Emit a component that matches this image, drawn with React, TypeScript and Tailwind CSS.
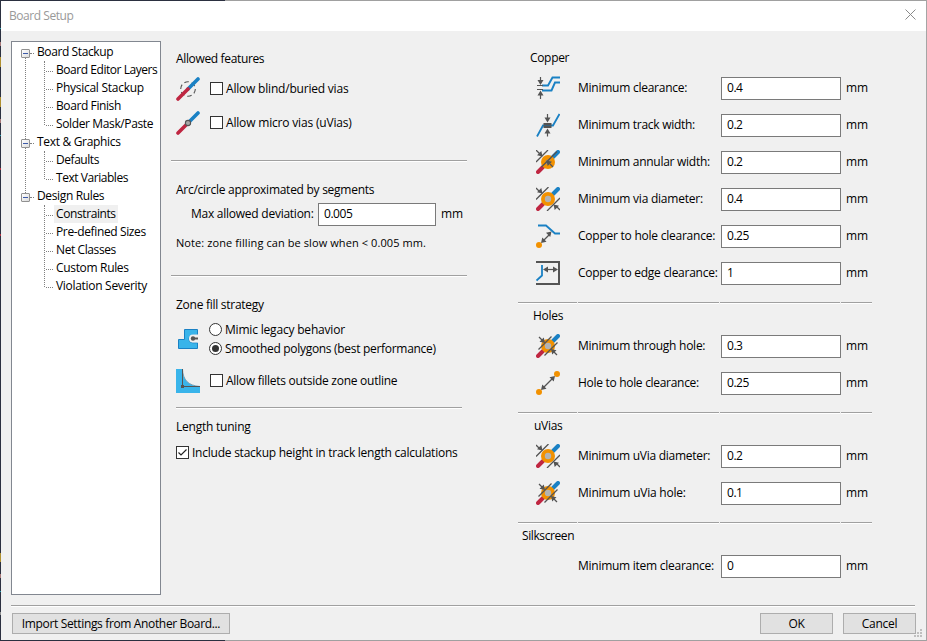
import type { ReactNode } from "react";

const GRAY = "#545454";
const BLUE = "#1a81c4";
const RED = "#bf2641";
const ORANGE = "#f29100";
const SKY = "#39b4ea";

function Icon({ children }: { children: ReactNode }) {
  return (
    <svg width="24" height="24" viewBox="0 0 24 24" fill="none" className="block shrink-0">
      {children}
    </svg>
  );
}

function Track() {
  return (
    <>
      <path d="M12 12 22 2" stroke={BLUE} strokeWidth="3.6" strokeLinecap="round" />
      <path d="M2 22 12 12" stroke={RED} strokeWidth="3.6" strokeLinecap="round" />
    </>
  );
}

function BlindViaIcon() {
  return (
    <Icon>
      <circle cx="12" cy="12" r="7.3" stroke={GRAY} strokeWidth="1.1" strokeDasharray="4.6 3" />
      <Track />
    </Icon>
  );
}

function MicroViaIcon() {
  return (
    <Icon>
      <Track />
      <circle cx="12" cy="12" r="2.6" fill="#a8a8a8" stroke={GRAY} strokeWidth="1.1" />
    </Icon>
  );
}

function ZoneFillIcon() {
  return (
    <Icon>
      <path
        d="M2.5 12.5h6v-10h13v5.7h-4.8a3.8 3.8 0 0 0 0 7.6h4.8v5.7h-19z"
        fill={SKY}
        stroke={BLUE}
      />
      <path d="M22 7.5h-5a4 4 0 0 0 0 8h5z" fill="#f0f0f0" />
      <path d="M17 11.500h5" stroke={GRAY} strokeWidth="2" />
      <circle cx="17" cy="11.500" r="2.2" fill={GRAY} />
    </Icon>
  );
}

function FilletIcon() {
  return (
    <Icon>
      <path d="M0 0h6.5C7 11 12 16.500 24 17.500V24H0z" fill={SKY} />
      <path d="M6.500 0C7 11 12 16.500 24 17.500" stroke="#6f9db5" strokeWidth=".9" />
      <path d="M6.500 0v17.500H24" stroke={GRAY} />
      <path d="M5 16h3v3H5z" fill={GRAY} />
    </Icon>
  );
}

function ClearanceIcon() {
  return (
    <Icon>
      <path d="M6 9.500h6L16.500 1.500H24" stroke={BLUE} strokeWidth="1.900" />
      <path d="M6 14.500h9.500L19 6.500h5" stroke={BLUE} strokeWidth="1.900" />
      <path d="M1 9.500h6M1 13.500h6" stroke={GRAY} strokeWidth="1" />
      <path d="M4.500 1v4M4.500 23v-4" stroke={GRAY} strokeWidth="1.200" />
      <path d="M1.500 4h6l-3 5zM1.500 19.500h6l-3-5z" fill={GRAY} />
    </Icon>
  );
}

function TrackWidthIcon() {
  return (
    <Icon>
      <path d="M1 23.500 7 12.500h10L23.500 1" stroke={BLUE} strokeWidth="1.800" />
      <path d="M7.500 10h8v5h-8z" fill={GRAY} />
      <path d="M8 12.500h7" stroke="#37617d" />
      <path d="M11.500 1v4M11.500 23.500v-4" stroke={GRAY} strokeWidth="1.200" />
      <path d="M8.500 4.500h6l-3 5zM8.500 20.500h6l-3-5z" fill={GRAY} />
    </Icon>
  );
}

function ThickTrack() {
  return (
    <>
      <path d="M17 7 22 2" stroke={BLUE} strokeWidth="4" strokeLinecap="round" />
      <path d="M2 22 7 17" stroke={RED} strokeWidth="4" strokeLinecap="round" />
    </>
  );
}

function AnnularIcon() {
  return (
    <Icon>
      <ThickTrack />
      <circle cx="12" cy="12" r="7" fill={ORANGE} />
      <circle cx="12" cy="12" r="2.600" fill="#a89270" />
      <path d="M0 12 12 0M5.500 17 21 1.500" stroke={GRAY} strokeWidth="1.300" />
      <path d="M0 0 4 4M17 17l-3-3" stroke={GRAY} strokeWidth="1.300" />
      <path d="M6.500 6.500 5.300 1 1 5.300zM10.500 10.500l1.200 5.500 4.300-4.300z" fill={GRAY} />
    </Icon>
  );
}

function ViaDiameterIcon() {
  return (
    <Icon>
      <ThickTrack />
      <circle cx="12" cy="12" r="7" fill={ORANGE} />
      <circle cx="12" cy="12" r="3.200" fill="#b3b3b3" />
      <path d="M0 12.500 12.500 0M11 24 24 11" stroke={GRAY} strokeWidth="1.300" />
      <path d="M0 1 4 5M24 23l-4-4" stroke={GRAY} strokeWidth="1.300" />
      <path d="M6.500 6.500 5.300 1 1 5.300zM17.500 17.500l1.200 5.500 4.300-4.300z" fill={GRAY} />
    </Icon>
  );
}

function HoleSizeIcon() {
  return (
    <Icon>
      <ThickTrack />
      <circle cx="12" cy="12" r="7" fill={ORANGE} />
      <circle cx="12" cy="12" r="3.200" fill="#b3b3b3" />
      <path d="M2.500 15.500 15.500 2.500M8.500 21.500 21.500 8.500" stroke={GRAY} strokeWidth="1.300" />
      <path d="M3 3 6 6M21 21l-3-3" stroke={GRAY} strokeWidth="1.300" />
      <path d="M9 9 7.800 3.500 3.500 7.800zM15 15l1.200 5.500 4.300-4.300z" fill={GRAY} />
    </Icon>
  );
}

function CopperHoleIcon() {
  return (
    <Icon>
      <path d="M2 1.500h8l9 8h5" stroke={BLUE} strokeWidth="1.800" />
      <circle cx="3" cy="21" r="3" fill={ORANGE} />
      <path d="M7 17l7-7" stroke={GRAY} strokeWidth="1.200" />
      <path d="M15.500 7.500l-1.300 5.500-4.200-4.200zM5 19l1.300-5.500 4.200 4.200z" fill={GRAY} />
    </Icon>
  );
}

function CopperEdgeIcon() {
  return (
    <Icon>
      <path d="M0 1h23v22H0" stroke={GRAY} strokeWidth="2" />
      <path d="M6 4v10.500L.500 19.500" stroke={BLUE} strokeWidth="1.800" />
      <path d="M10 8.500h9" stroke={GRAY} strokeWidth="1.200" />
      <path d="M7 8.500l5-3v6zM22 8.500l-5-3v6z" fill={GRAY} />
    </Icon>
  );
}

function HoleToHoleIcon() {
  return (
    <Icon>
      <circle cx="3" cy="21" r="3" fill={ORANGE} />
      <circle cx="21" cy="3" r="3" fill={ORANGE} />
      <path d="M7 17 17 7" stroke={GRAY} strokeWidth="1.200" />
      <path d="M19 5l-1.300 5.500-4.200-4.200zM5 19l1.300-5.500 4.200 4.200z" fill={GRAY} />
    </Icon>
  );
}

function Rule({ className = "" }: { className?: string }) {
  return <div className={`h-[2px] border-t border-[#a0a0a0] bg-white ${className}`} />;
}

function Check({ checked = false }: { checked?: boolean }) {
  return (
    <span className="block size-[13px] shrink-0 border border-[#333] bg-white">
      {checked && (
        <svg width="11" height="11" viewBox="0 0 11 11" fill="none" className="block">
          <path d="M1.500 5.500 4 8l5.500-5.500" stroke="#222" strokeWidth="1.200" />
        </svg>
      )}
    </span>
  );
}

function Radio({ checked = false }: { checked?: boolean }) {
  return (
    <span className="flex size-[13px] shrink-0 items-center justify-center rounded-full border border-[#333] bg-white">
      {checked && <span className="size-[7px] rounded-full bg-[#333]" />}
    </span>
  );
}

function Field({ value, className }: { value: string; className: string }) {
  return (
    <div className={`flex h-[23px] shrink-0 items-center border border-[#7a7a7a] bg-white pl-[5px] pb-px ${className}`}>
      <span className="tracking-[-0.45px]">{value}</span>
    </div>
  );
}

type Leaf = { text: string; track: string; active?: boolean };
type Group = { text: string; track: string; items: Leaf[] };

const tree: Group[] = [
  {
    text: "Board Stackup",
    track: "tracking-[-0.4px]",
    items: [
      { text: "Board Editor Layers", track: "tracking-[-0.45px]" },
      { text: "Physical Stackup", track: "tracking-[-0.27px]" },
      { text: "Board Finish", track: "tracking-[-0.4px]" },
      { text: "Solder Mask/Paste", track: "tracking-[-0.37px]" },
    ],
  },
  {
    text: "Text & Graphics",
    track: "tracking-[-0.32px]",
    items: [
      { text: "Defaults", track: "tracking-[-0.45px]" },
      { text: "Text Variables", track: "tracking-[-0.45px]" },
    ],
  },
  {
    text: "Design Rules",
    track: "tracking-[-0.35px]",
    items: [
      { text: "Constraints", track: "tracking-[-0.4px]", active: true },
      { text: "Pre-defined Sizes", track: "tracking-[-0.37px]" },
      { text: "Net Classes", track: "tracking-[-0.4px]" },
      { text: "Custom Rules", track: "tracking-[-0.33px]" },
      { text: "Violation Severity", track: "tracking-[-0.3px]" },
    ],
  },
];

function TreeGroup({ group, last }: { group: Group; last: boolean }) {
  return (
    <div className="relative">
      {!last && <div className="absolute top-[15px] -bottom-[6px] left-[13px] border-l border-dotted border-[#808080]" />}
      <div className="flex h-[18px] items-center pl-[9px]">
        <span className="relative mt-[3px] flex size-[9px] shrink-0 items-center justify-center rounded-[1px] border border-[#919191] bg-gradient-to-br from-white to-[#dcdcdc]">
          <span className="h-px w-[5px] bg-[#3c5aa8]" />
        </span>
        <span className="mt-[3px] w-[4px] shrink-0 border-t border-dotted border-[#808080]" />
        <span className={`ml-[3px] ${group.track}`}>{group.text}</span>
      </div>
      <div className="relative">
        <div className="absolute top-0 bottom-[8px] left-[32px] border-l border-dotted border-[#808080]" />
        {group.items.map((item) => (
          <div key={item.text} className="flex h-[18px] items-center pl-[34px]">
            <span className="mt-[3px] w-[7px] shrink-0 border-t border-dotted border-[#808080]" />
            <span className={`ml-px flex h-[18px] items-center px-[2px] ${item.track} ${item.active ? "bg-[#f0f0f0]" : ""}`}>
              {item.text}
            </span>
          </div>
        ))}
      </div>
    </div>
  );
}

type RowData = { icon?: ReactNode; label: string; track: string; value: string };

function Row({ icon, label, track, value }: RowData) {
  return (
    <div className="flex h-[37px] items-center">
      <div className="ml-[18px] w-[42px] -mt-px">{icon}</div>
      <div className={`w-[143px] -mt-px ${track}`}>{label}</div>
      <Field value={value} className="w-[120px]" />
      <span className="ml-[5px] -mt-px">mm</span>
    </div>
  );
}

function Section({ title, indent, rows, first = false }: { title: string; indent: string; rows: RowData[]; first?: boolean }) {
  return (
    <section>
      {!first && (
        <div className="flex gap-px pt-[10px]">
          <Rule className="w-[59px]" />
          <Rule className="w-[142px]" />
          <Rule className="w-[120px]" />
          <Rule className="w-[31px]" />
        </div>
      )}
      <div className={`flex h-[24px] items-center ${indent}`}>{title}</div>
      {rows.map((row) => (
        <Row key={row.label} {...row} />
      ))}
    </section>
  );
}

function Button({ children, className }: { children: ReactNode; className: string }) {
  return (
    <div className={`flex h-[21px] items-center justify-center border border-[#adadad] bg-[#e1e1e1] ${className}`}>
      {children}
    </div>
  );
}

function Grip() {
  return (
    <svg width="9" height="9" viewBox="0 0 9 9" className="absolute right-[4px] bottom-[3px]">
      <path d="M6 0h2v2H6zM3 3h2v2H3zM6 3h2v2H6zM0 6h2v2H0zM3 6h2v2H3zM6 6h2v2H6z" fill="#bfbfbf" />
    </svg>
  );
}

const edgeMarks = [
  "h-[28px] bg-[#2b3040]",
  "h-px bg-[#22a0b0]",
  "h-[13px] bg-[#2b3040]",
  "h-[4px] bg-[#a87878]",
  "h-[11px] bg-[#2b3040]",
  "h-[10px] bg-[#b09030]",
  "h-[30px] bg-[#2b3040]",
  "h-[10px] bg-[#b09030]",
  "h-[12px] bg-[#2b3040]",
  "h-[4px] bg-[#a87878]",
  "h-[12px] bg-[#2b3040]",
  "h-px bg-[#22a0b0]",
  "h-[32px] bg-[#2b3040]",
  "h-[2px] bg-[#b03040]",
  "h-[64px] bg-[#2b3040]",
  "h-[2px] bg-[#b03040]",
  "h-[317px] bg-[#2b3040]",
  "h-[9px] bg-[#b09030]",
  "h-[12px] bg-[#2b3040]",
  "h-[4px] bg-[#a87878]",
  "h-[13px] bg-[#2b3040]",
  "h-px bg-[#22a0b0]",
  "h-[20px] bg-[#2b3040]",
  "h-[3px] bg-[#909090]",
  "flex-1 bg-[#2b3040]",
];

export default function App() {
  return (
    <div className="relative flex h-[641px] w-[927px] overflow-hidden bg-[#f0f0f0] font-['Open_Sans','Noto_Sans',sans-serif] text-[12px] leading-[16px] whitespace-nowrap text-black">
      <div className="flex w-px flex-col">
        {edgeMarks.map((mark, i) => (
          <div key={i} className={mark} />
        ))}
      </div>
      <div className="flex w-[925px] flex-col">
        <div className="flex h-px">
          <div className="w-[224px] bg-[#2b3040]" />
          <div className="flex-1 bg-[#a0a0a0]" />
        </div>
        <header className="flex h-[30px] items-center justify-between bg-white pr-[10px] pl-[8px] text-[#999]">
          <span className="tracking-[-0.45px]">Board Setup</span>
          <svg width="11" height="11" viewBox="0 0 11 11" className="mt-[-3px]">
            <path d="M.5.5l10 10M10.500.5l-10 10" stroke="#8a8a8a" strokeWidth="1" />
          </svg>
        </header>

        <div className="flex h-[574px]">
          <nav className="mt-[10px] ml-[10px] h-[554px] w-[150px] border border-[#828790] bg-white pt-px">
            {tree.map((group, i) => (
              <TreeGroup key={group.text} group={group} last={i === tree.length - 1} />
            ))}
          </nav>

          <main className="ml-[10px] w-[296px]">
            <div className="mt-[19px] ml-[5px] flex h-[18px] items-center tracking-[-0.35px]">Allowed features</div>
            <div className="mt-[9px] ml-[5px] flex h-[24px] items-center">
              <BlindViaIcon />
              <span className="-mt-px ml-[10px]"><Check /></span>
              <span className="ml-[3px] tracking-[-0.2px]">Allow blind/buried vias</span>
            </div>
            <div className="mt-[10px] ml-[5px] flex h-[24px] items-center">
              <MicroViaIcon />
              <span className="-mt-px ml-[10px]"><Check /></span>
              <span className="ml-[3px] tracking-[-0.18px]">Allow micro vias (uVias)</span>
            </div>
            <Rule className="mt-[25px]" />

            <div className="mt-[19px] ml-[5px] flex h-[18px] items-center tracking-[-0.27px]">
              Arc/circle approximated by segments
            </div>
            <div className="mt-[4px] ml-[20px] flex h-[23px] items-center">
              <span className="-mt-px w-[127px] tracking-[-0.25px]">Max allowed deviation:</span>
              <Field value="0.005" className="w-[118px]" />
              <span className="-mt-px ml-[5px]">mm</span>
            </div>
            <div className="mt-[8px] ml-[5px] flex h-[18px] items-center text-[11px] tracking-[0.09px]">
              Note: zone filling can be slow when &lt; 0.005 mm.
            </div>
            <Rule className="mt-[23px]" />

            <div className="mt-[19px] ml-[5px] flex h-[18px] items-center tracking-[-0.27px]">Zone fill strategy</div>
            <div className="mt-[6px] ml-[5px] flex h-[38px] items-center">
              <ZoneFillIcon />
              <div className="ml-[9px]">
                <div className="flex h-[19px] items-center gap-[3px]">
                  <Radio />
                  <span className="tracking-[-0.19px]">Mimic legacy behavior</span>
                </div>
                <div className="flex h-[19px] items-center gap-[3px]">
                  <Radio checked />
                  <span className="tracking-[-0.3px]">Smoothed polygons (best performance)</span>
                </div>
              </div>
            </div>
            <div className="mt-[11px] ml-[5px] flex h-[24px] items-center">
              <FilletIcon />
              <span className="-mt-px ml-[10px]"><Check /></span>
              <span className="ml-[3px] tracking-[-0.26px]">Allow fillets outside zone outline</span>
            </div>
            <Rule className="mt-[14px] ml-[5px] w-[286px]" />

            <div className="mt-[9px] ml-[5px] flex h-[18px] items-center tracking-[-0.23px]">Length tuning</div>
            <div className="mt-[10px] ml-[5px] flex h-[13px] items-center gap-[3px]">
              <Check checked />
              <span className="tracking-[-0.24px]">Include stackup height in track length calculations</span>
            </div>
          </main>

          <aside className="mt-[15px] ml-[51px] w-[354px]">
            <Section
              first
              title="Copper"
              indent="pl-[12px] tracking-[-0.33px]"
              rows={[
                { icon: <ClearanceIcon />, label: "Minimum clearance:", track: "tracking-[-0.25px]", value: "0.4" },
                { icon: <TrackWidthIcon />, label: "Minimum track width:", track: "tracking-[-0.27px]", value: "0.2" },
                { icon: <AnnularIcon />, label: "Minimum annular width:", track: "tracking-[-0.27px]", value: "0.2" },
                { icon: <ViaDiameterIcon />, label: "Minimum via diameter:", track: "tracking-[-0.23px]", value: "0.4" },
                { icon: <CopperHoleIcon />, label: "Copper to hole clearance:", track: "tracking-[-0.24px]", value: "0.25" },
                { icon: <CopperEdgeIcon />, label: "Copper to edge clearance:", track: "tracking-[-0.26px]", value: "1" },
              ]}
            />
            <Section
              title="Holes"
              indent="pl-[15px] tracking-[-0.3px]"
              rows={[
                { icon: <HoleSizeIcon />, label: "Minimum through hole:", track: "tracking-[-0.25px]", value: "0.3" },
                { icon: <HoleToHoleIcon />, label: "Hole to hole clearance:", track: "tracking-[-0.3px]", value: "0.25" },
              ]}
            />
            <Section
              title="uVias"
              indent="pl-[16px] tracking-[-0.3px]"
              rows={[
                { icon: <ViaDiameterIcon />, label: "Minimum uVia diameter:", track: "tracking-[-0.27px]", value: "0.2" },
                { icon: <HoleSizeIcon />, label: "Minimum uVia hole:", track: "tracking-[-0.22px]", value: "0.1" },
              ]}
            />
            <Section
              title="Silkscreen"
              indent="pl-[4px] tracking-[-0.4px]"
              rows={[{ label: "Minimum item clearance:", track: "tracking-[-0.26px]", value: "0" }]}
            />
          </aside>
        </div>

        <footer className="h-[35px] pr-[10px] pl-[10px]">
          <Rule className="mr-px" />
          <div className="mt-[6px] ml-px flex">
            <Button className="w-[218px] tracking-[-0.35px]">Import Settings from Another Board...</Button>
            <Button className="ml-auto w-[73px] tracking-[-0.3px]">OK</Button>
            <Button className="ml-[10px] w-[73px] tracking-[-0.25px]">Cancel</Button>
          </div>
        </footer>
        <div className="flex h-px">
          <div className="w-[224px] bg-[#2b3040]" />
          <div className="flex-1 bg-[#a0a0a0]" />
        </div>
      </div>
      <div className="w-px bg-[#a5a5a5]" />
      <Grip />
    </div>
  );
}
